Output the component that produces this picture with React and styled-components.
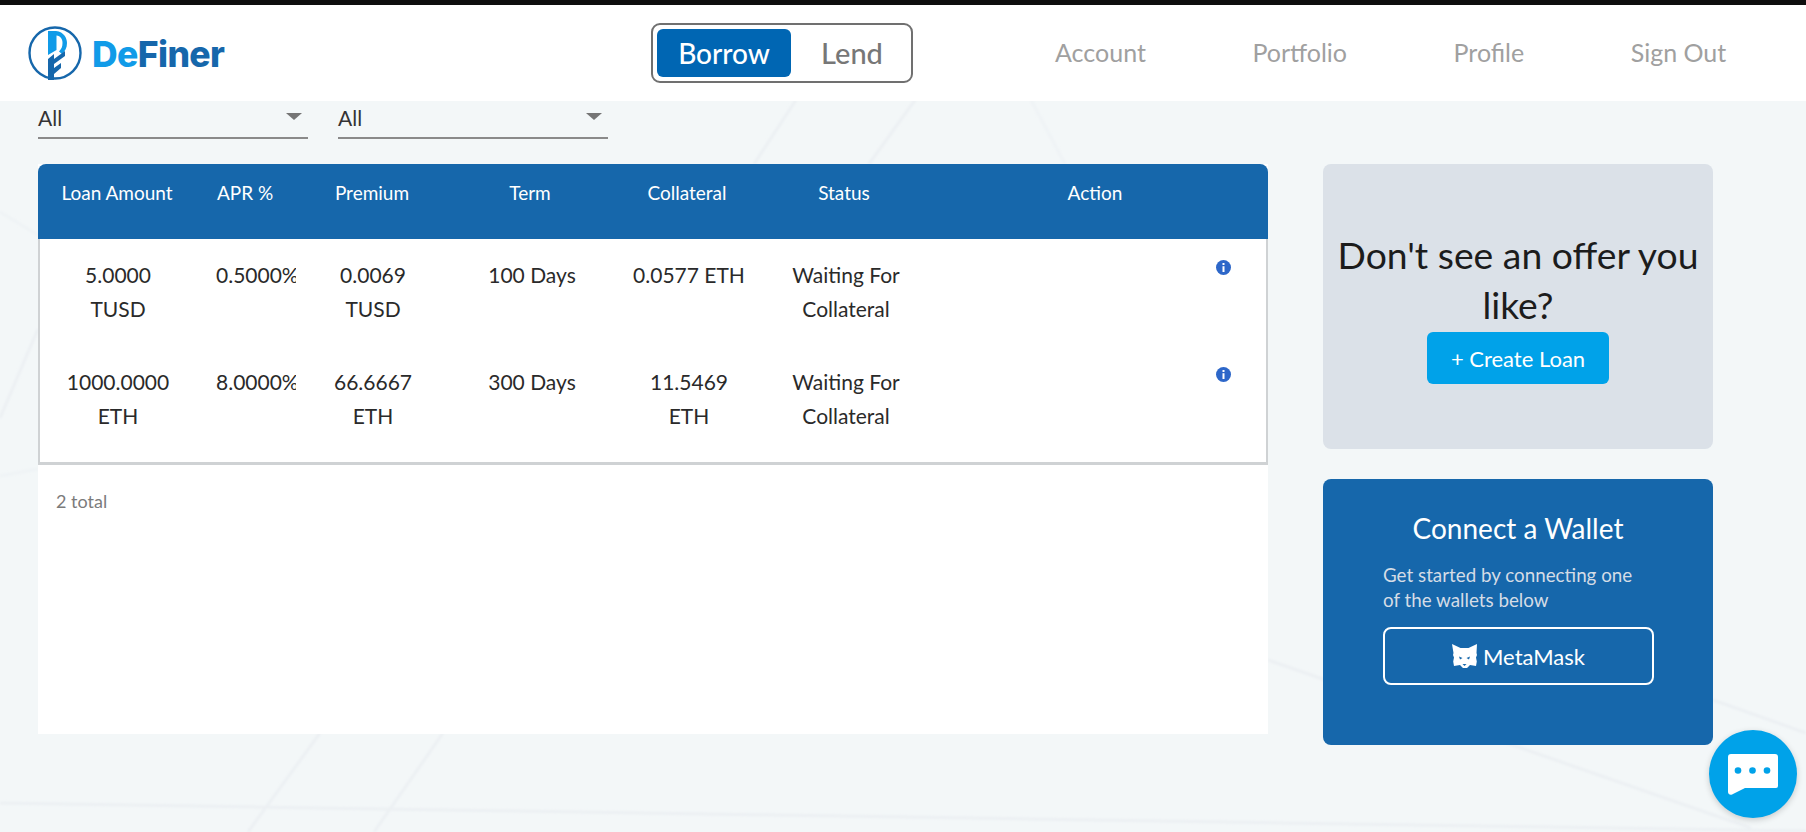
import React from "react";
import styled, { createGlobalStyle } from "styled-components";

const Global = createGlobalStyle`
  html, body { margin: 0; padding: 0; }
  body { background: #f3f7f8; font-family: Lato, "Open Sans", sans-serif; color: #212529; overflow: hidden; }
  * { box-sizing: border-box; }
`;

const Page = styled.div`
  position: relative;
  width: 1806px;
  height: 832px;
  overflow: hidden;
  border-top: 5px solid #0e0e0e;
`;
const Backdrop = styled.svg`
  position: absolute;
  left: 0;
  top: -5px;
  width: 1806px;
  height: 832px;
`;
const Header = styled.header`
  position: relative;
  height: 96px;
  background: #fff;
  display: flex;
  align-items: center;
  padding-left: 28px;
`;
const Brand = styled.div`
  display: flex;
  align-items: center;
  gap: 10px;
  width: 623px;
`;
const BrandName = styled.span`
  font-family: Inter, Roboto, sans-serif;
  font-weight: 800;
  font-size: 35.5px;
  letter-spacing: -0.6px;
  color: #1667ab;
  margin-top: 2px;
  & > b { color: #119be8; font-weight: 800; }
`;
const Toggle = styled.div`
  width: 262px;
  height: 60px;
  border: 2px solid #707070;
  border-radius: 9px;
  padding: 4px;
  display: flex;
  align-items: center;
`;
const ToggleItem = styled.div`
  flex: none;
  height: 48px;
  width: ${(p) => (p.$active ? "134px" : "116px")};
  padding-left: ${(p) => (p.$active ? "0" : "6px")};
  border-radius: 6px;
  background: ${(p) => (p.$active ? "#0066b3" : "transparent")};
  color: ${(p) => (p.$active ? "#fff" : "#777")};
  font-size: ${(p) => (p.$active ? "28px" : "29px")};
  line-height: 48px;
  font-weight: 500;
  text-align: center;
`;
const Nav = styled.nav`
  margin-left: 142px;
  display: flex;
  gap: 106.5px;
`;
const NavLink = styled.a`
  font-size: 25px;
  color: #a0a0a0;
  line-height: 30px;
  margin-top: -2px;
`;
const Main = styled.main`
  position: relative;
  display: grid;
  grid-template-columns: 1230px 390px;
  column-gap: 55px;
  padding-left: 38px;
`;
const Filters = styled.div`
  display: flex;
  gap: 30px;
  height: 38px;
  margin-bottom: 25px;
`;
const Select = styled.div`
  position: relative;
  width: 270px;
  height: 38px;
  border-bottom: 2px solid #8a8a8a;
  font-size: 21px;
  line-height: 34px;
  color: #333;
  &::after {
    content: "";
    position: absolute;
    right: 6px;
    top: 12px;
    border-left: 8px solid transparent;
    border-right: 8px solid transparent;
    border-top: 7px solid #757575;
  }
`;
const Panel = styled.section`
  background: #fff;
  height: 570px;
`;
const rowGrid = `
  display: grid;
  grid-template-columns: 160px 98px 154px 164px 150px 164px 340px;
`;
const HeadRow = styled.div`
  ${rowGrid}
  height: 75px;
  background: #1667ab;
  border-radius: 8px 8px 0 0;
  color: #fff;
  font-size: 19px;
  line-height: 24px;
  padding-top: 17px;
  text-align: center;
`;
const HeadCell = styled.div`
  white-space: nowrap;
  text-align: ${(p) => (p.$apr ? "left" : "center")};
  padding-left: ${(p) => (p.$apr ? "19px" : "0")};
  padding-right: ${(p) => p.$shift || 0}px;
`;
const Body = styled.div`
  border-left: 2px solid #cfd2d4;
  border-right: 2px solid #cfd2d4;
  border-bottom: 3px solid #cfd2d4;
  height: 226px;
`;
const Row = styled.div`
  ${rowGrid}
  height: 107px;
  padding-top: 19px;
  margin-left: -2px;
  margin-right: -2px;
  font-size: 21px;
  line-height: 34px;
  color: #2a2a2a;
  text-align: center;
`;
const Cell = styled.div`
  overflow: hidden;
  white-space: ${(p) => (p.$clip ? "nowrap" : "normal")};
  text-align: ${(p) => (p.$clip ? "left" : "center")};
  padding-left: ${(p) => (p.$clip ? "18px" : "0")};
`;
const Wrap = styled.span`
  display: inline-block;
  width: ${(p) => p.$w}px;
`;
const InfoCell = styled.div`
  display: flex;
  justify-content: flex-end;
  padding: 2px 37px 0 0;
  align-items: flex-start;
`;
const Total = styled.div`
  padding: 24px 0 0 18px;
  font-size: 18px;
  line-height: 24px;
  color: #7b7b7b;
`;
const Side = styled.aside`
  padding-top: 63px;
  display: flex;
  flex-direction: column;
  gap: 30px;
`;
const OfferCard = styled.div`
  height: 285px;
  background: #dbe1e8;
  border-radius: 8px;
  padding-top: 66px;
  display: flex;
  flex-direction: column;
  align-items: center;
`;
const OfferTitle = styled.h2`
  margin: 0 0 2px;
  font-weight: 400;
  font-size: 37.3px;
  line-height: 50px;
  text-align: center;
  color: #1c1c1c;
`;
const CreateButton = styled.button`
  width: 182px;
  height: 52px;
  border: 0;
  border-radius: 6px;
  background: #00a2e9;
  color: #fff;
  font: 400 22px Lato, sans-serif;
`;
const WalletCard = styled.div`
  height: 266px;
  background: #1667ab;
  border-radius: 8px;
  padding: 31px 60px 0;
  color: #fff;
`;
const WalletTitle = styled.h3`
  margin: 0 0 16px;
  font-weight: 400;
  font-size: 28px;
  line-height: 36px;
  text-align: center;
`;
const WalletText = styled.p`
  margin: 0 0 15px;
  font-size: 18.8px;
  line-height: 25px;
  color: #d4dce6;
`;
const MetaButton = styled.button`
  width: 271px;
  height: 58px;
  background: transparent;
  border: 2px solid #fff;
  border-radius: 8px;
  color: #fff;
  font: 400 22px Lato, sans-serif;
  display: flex;
  align-items: center;
  justify-content: center;
  gap: 6px;
`;
const Chat = styled.div`
  position: absolute;
  left: 1709px;
  top: 725px;
  width: 88px;
  height: 88px;
  border-radius: 50%;
  background: #00a2e9;
  box-shadow: 0 2px 6px rgba(0, 0, 0, 0.18);
  display: flex;
  align-items: center;
  justify-content: center;
`;

const Logo = () => (
  <svg width="54" height="54" viewBox="0 0 54 54" fill="none">
    <circle cx="27" cy="27" r="25.500" stroke="#1667ab" strokeWidth="2.400" />
    <path d="M20 5h8c8 1 11 7 11 12 0 5-2 8-5 11l-3-2.500c2.500-2.500 3.500-5 3.500-8.500 0-4-2-7-6-7.500V24L20 29z" fill="#119be8" />
    <path d="M20 33l6-5v5l11-8v5l-11 8v4l7-5v5l-7 6v9h-6z" fill="#1667ab" />
  </svg>
);

const Info = () => (
  <svg width="15" height="15" viewBox="0 0 15 15">
    <circle cx="7.500" cy="7.500" r="7.500" fill="#2d67c9" />
    <rect x="6.500" y="6.200" width="2" height="5.800" fill="#fff" />
    <rect x="6.500" y="3" width="2" height="2" fill="#fff" />
  </svg>
);

const Fox = () => (
  <svg width="25" height="24" viewBox="0 0 25 24">
    <path fill="#fff" d="M0 0l8.500 4h8L25 0l-.5 9 .5 2-1 2.500.8 4-.8 4.500-6-1-3 3h-4l-3-3-6 1-.8-4.500.8-4-1-2.500.5-2z" />
    <path fill="#1667ab" d="M7 12.500l3.500 1.500-2.500 1.500zM18 12.500L14.500 14l2.500 1.500zM10.500 20h4l-2 2z" />
  </svg>
);

const ChatBubble = () => (
  <svg width="50" height="41" viewBox="0 0 50 41">
    <path fill="#fff" d="M3 0h44a3 3 0 0 1 3 3v29a2 2 0 0 1-2 2H17L4 40.500C2 41.300 0 40 0 38V3a3 3 0 0 1 3-3z" />
    <circle cx="10" cy="16.500" r="3.300" fill="#00a2e9" />
    <circle cx="24.500" cy="16.500" r="3.300" fill="#00a2e9" />
    <circle cx="39" cy="16.500" r="3.300" fill="#00a2e9" />
  </svg>
);

const rows = [
  ["5.0000 TUSD", "0.5000%", "0.0069 TUSD", "100 Days", "0.0577 ETH", "Waiting For Collateral"],
  ["1000.0000 ETH", "8.0000%", "66.6667 ETH", "300 Days", "11.5469 ETH", "Waiting For Collateral"],
];

export default function App() {
  return (
    <Page>
      <Global />
      <Backdrop viewBox="0 0 1806 832" fill="none" stroke="#ecf0f3" strokeWidth="3">
        <defs>
          <filter id="soft"><feGaussianBlur stdDeviation="1.200" /></filter>
        </defs>
        <g filter="url(#soft)">
          <path d="M796 100L754 164" />
          <path d="M915 100L869 164" />
          <path d="M1031 100L1065 164" strokeOpacity="0.5" />
          <path d="M320 733L248 832" />
          <path d="M443 733L374 832" />
          <path d="M0 803L1806 831" />
          <path d="M1268 660L1751 828" />
          <path d="M1713 700L1806 733" />
          <path d="M0 418L38 329" />
          <path d="M0 212L38 235" strokeOpacity="0.5" />
          <path d="M0 476L38 469" strokeOpacity="0.5" />
        </g>
      </Backdrop>
      <Header>
        <Brand>
          <Logo />
          <BrandName><b>De</b>Finer</BrandName>
        </Brand>
        <Toggle>
          <ToggleItem $active>Borrow</ToggleItem>
          <ToggleItem>Lend</ToggleItem>
        </Toggle>
        <Nav>
          <NavLink>Account</NavLink>
          <NavLink>Portfolio</NavLink>
          <NavLink>Profile</NavLink>
          <NavLink>Sign Out</NavLink>
        </Nav>
      </Header>
      <Main>
        <div>
          <Filters>
            <Select>All</Select>
            <Select>All</Select>
          </Filters>
          <Panel>
            <HeadRow>
              <HeadCell $shift={2}>Loan Amount</HeadCell>
              <HeadCell $apr>APR %</HeadCell>
              <HeadCell $shift={2}>Premium</HeadCell>
              <HeadCell $shift={4}>Term</HeadCell>
              <HeadCell $shift={4}>Collateral</HeadCell>
              <HeadCell $shift={4}>Status</HeadCell>
              <HeadCell $shift={6}>Action</HeadCell>
            </HeadRow>
            <Body>
              {rows.map((r) => (
                <Row key={r[0]}>
                  <Cell><Wrap $w={115}>{r[0]}</Wrap></Cell>
                  <Cell $clip>{r[1]}</Cell>
                  <Cell><Wrap $w={115}>{r[2]}</Wrap></Cell>
                  <Cell>{r[3]}</Cell>
                  <Cell><Wrap $w={r[4].startsWith("11") ? 115 : 150}>{r[4]}</Wrap></Cell>
                  <Cell><Wrap $w={130}>{r[5]}</Wrap></Cell>
                  <InfoCell><Info /></InfoCell>
                </Row>
              ))}
            </Body>
            <Total>2 total</Total>
          </Panel>
        </div>
        <Side>
          <OfferCard>
            <OfferTitle>Don't see an offer you<br />like?</OfferTitle>
            <CreateButton>+ Create Loan</CreateButton>
          </OfferCard>
          <WalletCard>
            <WalletTitle>Connect a Wallet</WalletTitle>
            <WalletText>Get started by connecting one<br />of the wallets below</WalletText>
            <MetaButton><Fox />MetaMask</MetaButton>
          </WalletCard>
        </Side>
      </Main>
      <Chat><ChatBubble /></Chat>
    </Page>
  );
}
